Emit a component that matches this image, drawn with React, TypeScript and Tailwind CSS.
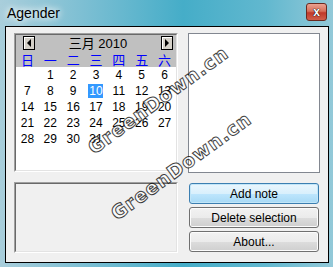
import React from "react";

const weekdays = ["日", "一", "二", "三", "四", "五", "六"];
const weeks: (number | null)[][] = [
  [null, 1, 2, 3, 4, 5, 6],
  [7, 8, 9, 10, 11, 12, 13],
  [14, 15, 16, 17, 18, 19, 20],
  [21, 22, 23, 24, 25, 26, 27],
  [28, 29, 30, 31, null, null, null],
  [null, null, null, null, null, null, null],
];

function ArrowButton({ dir }: { dir: "left" | "right" }) {
  return (
    <div className="w-[12px] h-[14px] border border-black bg-[#d4d0c8] flex items-center justify-center shadow-[inset_1px_1px_0_#ffffff]">
      {dir === "left" ? (
        <div className="w-0 h-0 border-y-[4px] border-y-transparent border-r-[4px] border-r-black" />
      ) : (
        <div className="w-0 h-0 border-y-[4px] border-y-transparent border-l-[4px] border-l-black" />
      )}
    </div>
  );
}

function Calendar() {
  return (
    <div className="w-[164px] h-[139px] border border-t-[#a0a0a0] border-l-[#a0a0a0] border-r-white border-b-white">
      <div className="h-full border border-t-[#696969] border-l-[#696969] border-r-[#e3e3e3] border-b-[#e3e3e3] bg-white">
        <div className="bg-[#c0c0c0]">
          <div className="h-[16px] flex items-center justify-between pl-[7px] pr-[3px]">
            <ArrowButton dir="left" />
            <span className="text-[13px] text-black font-['Liberation_Sans','Noto_Sans_CJK_SC',sans-serif] leading-none">
              三月 2010
            </span>
            <ArrowButton dir="right" />
          </div>
          <div className="h-[16px] grid grid-cols-7">
            {weekdays.map((d) => (
              <div key={d} className="flex items-center justify-center text-[13px] leading-none text-[#0000ff] font-['Noto_Sans_CJK_SC',sans-serif]">
                {d}
              </div>
            ))}
          </div>
        </div>
        {weeks.map((w, i) => (
          <div key={i} className="h-[16px] grid grid-cols-7">
            {w.map((d, j) => (
              <div key={j} className="flex items-center justify-center">
                {d === 10 ? (
                  <span className="w-[15px] h-[14px] bg-[#3399ff] text-white text-[12px] leading-none flex items-center justify-center">
                    {d}
                  </span>
                ) : (
                  <span className="text-[12px] leading-none text-black">{d ?? ""}</span>
                )}
              </div>
            ))}
          </div>
        ))}
      </div>
    </div>
  );
}

function Button({ label, primary }: { label: string; primary?: boolean }) {
  return (
    <div
      className={
        primary
          ? "h-[21px] rounded-[3px] border border-[#3c7fb1] bg-[linear-gradient(180deg,#eaf6fd_0%,#d9f0fc_50%,#bee6fd_51%,#a7d9f5_100%)] shadow-[inset_0_0_0_1px_#c2e6f8] flex items-center justify-center text-[12px] text-black"
          : "h-[21px] rounded-[3px] border border-[#707070] bg-[linear-gradient(180deg,#f2f2f2_0%,#ebebeb_50%,#dddddd_51%,#cfcfcf_100%)] shadow-[inset_0_0_0_1px_#fcfcfc] flex items-center justify-center text-[12px] text-black"
      }
    >
      {label}
    </div>
  );
}

export default function App() {
  return (
    <div className="relative w-[333px] h-[267px] overflow-hidden flex flex-col bg-[linear-gradient(90deg,#a9cedb_0%,#7dbfd3_25%,#45adc8_55%,#62b8cf_80%,#93c9d8_100%)] font-['Liberation_Sans',sans-serif]">
      <div className="h-[26px] flex items-center justify-between pl-[7px] pr-[6px]">
        <span className="text-[14px] text-black leading-none [text-shadow:0_0_6px_#ffffff,0_0_10px_#ffffff]">
          Agender
        </span>
        <div className="mt-[-3px] w-[21px] h-[18px] rounded-[3px] border border-[#6b2a20] bg-[linear-gradient(180deg,#eba190_0%,#d6705a_45%,#c0392a_55%,#d0604a_100%)] flex items-center justify-center">
          <span className="text-[12px] font-bold text-white leading-none [text-shadow:0_0_1px_#000,0_0_1px_#000]">x</span>
        </div>
      </div>
      <div className="ml-[5px] mr-[4px] h-[237px] border border-black bg-[#f0f0f0] pt-[6px] px-[8px]">
        <div className="flex gap-[10px]">
          <Calendar />
          <div className="w-[132px] h-[140px] border border-[#828790] bg-white" />
        </div>
        <div className="flex gap-[10px] mt-[9px]">
          <div className="w-[164px] h-[71px] border border-t-[#a0a0a0] border-l-[#a0a0a0] border-r-white border-b-white">
            <div className="h-full border border-t-[#696969] border-l-[#696969] border-r-[#e3e3e3] border-b-[#e3e3e3] bg-[#f0f0f0]" />
          </div>
          <div className="w-[130px] ml-[1px] mt-[1px] flex flex-col gap-[3px]">
            <Button label="Add note" primary />
            <Button label="Delete selection" />
            <Button label="About..." />
          </div>
        </div>
      </div>
      <div className="pointer-events-none absolute left-[158px] top-[100px] -translate-x-1/2 -translate-y-1/2 -rotate-[36deg] whitespace-nowrap text-[19px] font-bold tracking-[1px] text-white font-['DejaVu_Sans',sans-serif] [-webkit-text-stroke:1px_#000000] opacity-75">
        GreenDown.cn
      </div>
      <div className="pointer-events-none absolute left-[181px] top-[166px] -translate-x-1/2 -translate-y-1/2 -rotate-[36deg] whitespace-nowrap text-[19px] font-bold tracking-[1px] text-white font-['DejaVu_Sans',sans-serif] [-webkit-text-stroke:1px_#000000] opacity-75">
        GreenDown.cn
      </div>
    </div>
  );
}
